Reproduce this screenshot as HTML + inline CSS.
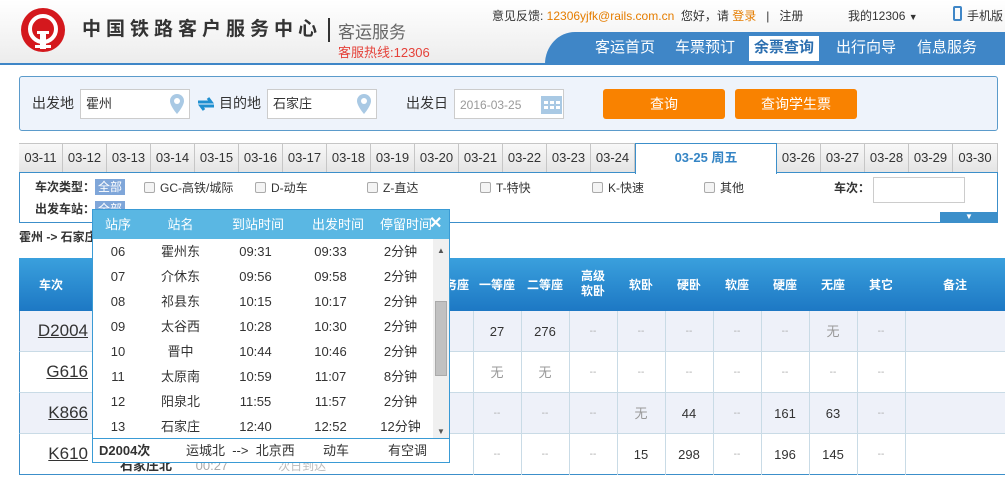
<!DOCTYPE html>
<html><head><meta charset="utf-8"><style>
*{margin:0;padding:0;box-sizing:border-box}
body{width:1005px;height:480px;overflow:hidden;position:relative;font-family:"Liberation Sans","Noto Sans CJK SC",sans-serif;font-size:12px;line-height:16px;color:#333;background:#fff}
.a{position:absolute}
.hdr{left:0;top:0;width:1005px;height:64px;background:linear-gradient(#fff,#ececec)}
.nav{left:545px;top:32px;width:460px;height:32px;background:#3f86c7;border-top-left-radius:30px 32px}
.nav span{position:absolute;top:6px;color:#fff;font-size:15px;line-height:20px}
.sb{left:19px;top:76px;width:979px;height:55px;background:#eef3fb;border:1px solid #5b9bcb;border-radius:3px}
.inp{background:#fff;border:1px solid #ccc;height:30px;top:89px;font-size:13px;padding:6px 5px;color:#333}
.lbl{font-size:14px;top:95px;color:#333}
.btn{top:89px;height:30px;background:#f98200;border-radius:3px;color:#fff;font-size:14px;text-align:center;line-height:30px}
.tab{top:143px;height:30px;width:44px;border:1px solid #c6c6c6;border-left:none;background:linear-gradient(#f8f8f8,#e4e4e4);text-align:center;line-height:28px;font-size:13px;color:#333}
.fb{left:19px;top:172px;width:979px;height:51px;border:1px solid #3c8fca;border-top:1px solid #3c8fca}
.cb{display:inline-block;width:11px;height:11px;border:1px solid #aaa;border-radius:2px;background:#f4f4f4;vertical-align:-1px;margin-right:5px}
.th{top:258px;height:53px;background:linear-gradient(#3aa0dd,#1d78c4);left:19px;width:986px}
.row{left:19px;width:986px;height:41px;border-bottom:1px solid #c9dbe6;border-left:1px solid #3c8fca}
.cell{position:absolute;width:48px;text-align:center;font-size:13px;top:13px;color:#333;line-height:16px}
.g{color:#aaa;font-size:10px;top:13px}
.vl{position:absolute;top:311px;width:1px;height:164px;background:#c9dbe6}
.tn{position:absolute;left:8px;top:10px;font-size:17px;line-height:20px;text-decoration:underline;color:#333;width:60px;text-align:right}
.pop{left:92px;top:209px;width:358px;height:254px;background:#fff;border:1px solid #3a9bd5}
.ph{left:0;top:0;width:356px;height:29px;background:#5ab7e3;color:#fff;font-size:13px}
.ph span,.pr span{position:absolute;text-align:center;line-height:16px}
.pr{left:0;width:340px;height:25px;font-size:13px;color:#333}
</style></head><body>
<div class="a hdr"></div>
<div class="a" style="left:0;top:63px;width:1005px;height:2px;background:#3f86c7"></div>
<svg class="a" style="left:20px;top:7px" width="46" height="46" viewBox="0 0 46 46"><circle cx="23" cy="23" r="22" fill="#d4181d"/><circle cx="23" cy="22" r="13" fill="none" stroke="#fff" stroke-width="4"/><path d="M17 24h12v3h-3v11h5v3H15v-3h5V27h-3z" fill="#fff"/><rect x="20" y="30" width="6" height="12" fill="#fff"/></svg>
<div class="a" style="left:82px;top:18px;font-size:19px;line-height:24px;font-weight:bold;color:#333;letter-spacing:5px">中国铁路客户服务中心</div>
<div class="a" style="left:328px;top:18px;width:2px;height:24px;background:#333"></div>
<div class="a" style="left:338px;top:22px;font-size:17px;line-height:22px;color:#666">客运服务</div>
<div class="a" style="left:338px;top:45px;font-size:13px;color:#e5423a">客服热线:12306</div>
<div class="a" style="left:492px;top:8px;font-size:12px;color:#333">意见反馈: <span style="color:#e57d00">12306yjfk@rails.com.cn</span>&nbsp;&nbsp;您好，请 <span style="color:#e57d00">登录</span>&nbsp;&nbsp;&nbsp;|&nbsp;&nbsp;&nbsp;注册</div>
<div class="a" style="left:848px;top:8px;font-size:12px">我的12306 <span style="font-size:9px">▼</span></div>
<div class="a" style="left:953px;top:6px;width:9px;height:15px;border:2px solid #3f86c7;border-radius:2px"></div>
<div class="a" style="left:967px;top:8px;font-size:12px">手机版</div>
<div class="a nav"><span style="left:50px">客运首页</span><span style="left:130px">车票预订</span><span style="left:204px;top:4px;background:#fff;color:#2c6fb0;font-weight:bold;padding:2px 5px 3px">余票查询</span><span style="left:291px">出行向导</span><span style="left:372px">信息服务</span></div>

<div class="a sb"></div>
<div class="a lbl" style="left:32px">出发地</div>
<div class="a inp" style="left:80px;width:110px">霍州</div>
<svg class="a" style="left:169px;top:93px" width="16" height="22"><path d="M8 1a7 7 0 0 0-7 7c0 5 7 13 7 13s7-8 7-13a7 7 0 0 0-7-7z" fill="#a9c9e4"/><circle cx="8" cy="8" r="3" fill="#fff"/></svg>
<svg class="a" style="left:197px;top:96px" width="18" height="16"><path d="M1 6h13l-3-4M17 10H4l3 4" stroke="#1f8fd0" stroke-width="3" fill="none"/></svg>
<div class="a lbl" style="left:219px">目的地</div>
<div class="a inp" style="left:267px;width:110px">石家庄</div>
<svg class="a" style="left:356px;top:93px" width="16" height="22"><path d="M8 1a7 7 0 0 0-7 7c0 5 7 13 7 13s7-8 7-13a7 7 0 0 0-7-7z" fill="#a9c9e4"/><circle cx="8" cy="8" r="3" fill="#fff"/></svg>
<div class="a lbl" style="left:406px">出发日</div>
<div class="a inp" style="left:454px;width:110px;color:#999;font-size:12px;padding-top:7px">2016-03-25</div>
<svg class="a" style="left:541px;top:94px" width="21" height="20"><rect x="0" y="2" width="21" height="18" fill="#a9c9e4"/><g fill="#fff"><rect x="3" y="7" width="4" height="3"/><rect x="9" y="7" width="4" height="3"/><rect x="15" y="7" width="4" height="3"/><rect x="3" y="12" width="4" height="3"/><rect x="9" y="12" width="4" height="3"/><rect x="15" y="12" width="4" height="3"/></g></svg>
<div class="a btn" style="left:603px;width:122px">查询</div>
<div class="a btn" style="left:735px;width:122px">查询学生票</div>

<div class="a" style="left:19px;top:143px;width:1px;height:30px;background:#c6c6c6"></div>
<div class="a tab" style="left:19px">03-11</div><div class="a tab" style="left:63px">03-12</div><div class="a tab" style="left:107px">03-13</div><div class="a tab" style="left:151px">03-14</div><div class="a tab" style="left:195px">03-15</div><div class="a tab" style="left:239px">03-16</div><div class="a tab" style="left:283px">03-17</div><div class="a tab" style="left:327px">03-18</div><div class="a tab" style="left:371px">03-19</div><div class="a tab" style="left:415px">03-20</div><div class="a tab" style="left:459px">03-21</div><div class="a tab" style="left:503px">03-22</div><div class="a tab" style="left:547px">03-23</div><div class="a tab" style="left:591px">03-24</div>
<div class="a tab" style="left:777px">03-26</div><div class="a tab" style="left:821px">03-27</div><div class="a tab" style="left:865px">03-28</div><div class="a tab" style="left:909px">03-29</div><div class="a tab" style="left:953px;width:45px">03-30</div>
<div class="a fb"></div>
<div class="a" style="left:635px;top:143px;width:142px;height:31px;background:#fff;border:1px solid #3c8fca;border-bottom:none;text-align:center;line-height:28px;font-size:13px;font-weight:bold;color:#3585c5">03-25 周五</div>
<div class="a" style="left:35px;top:179px;font-weight:bold;font-size:12px">车次类型：<span style="background:#7fa6d9;color:#fff;font-weight:normal;padding:1px 3px">全部</span></div>
<div class="a" style="left:144px;top:180px"><span class="cb"></span>GC-高铁/城际</div>
<div class="a" style="left:255px;top:180px"><span class="cb"></span>D-动车</div>
<div class="a" style="left:367px;top:180px"><span class="cb"></span>Z-直达</div>
<div class="a" style="left:480px;top:180px"><span class="cb"></span>T-特快</div>
<div class="a" style="left:592px;top:180px"><span class="cb"></span>K-快速</div>
<div class="a" style="left:704px;top:180px"><span class="cb"></span>其他</div>
<div class="a" style="left:834px;top:180px;font-weight:bold">车次：</div>
<div class="a" style="left:873px;top:177px;width:92px;height:26px;border:1px solid #ccc"></div>
<div class="a" style="left:35px;top:201px;font-weight:bold;font-size:12px">出发车站：<span style="background:#7fa6d9;color:#fff;font-weight:normal;padding:1px 3px">全部</span></div>
<div class="a" style="left:940px;top:212px;width:58px;height:10px;background:#3c8fca;color:#fff;font-size:8px;text-align:center;line-height:10px">▼</div>
<div class="a" style="left:19px;top:229px;font-weight:bold;font-size:12px">霍州 -&gt; 石家庄</div>

<div class="a th"></div>
<div class="a" style="left:19px;top:258px;width:986px;height:53px">
<span class="a" style="left:20px;top:19px;color:#fff;font-weight:bold">车次</span>
<span class="a" style="left:414px;top:19px;color:#fff;font-weight:bold">商务座</span>
<div class="a" style="left:454px;top:0;width:528px;height:53px;color:#fff;font-weight:bold">
<span class="a" style="left:0;top:19px;width:48px;text-align:center">一等座</span>
<span class="a" style="left:48px;top:19px;width:48px;text-align:center">二等座</span>
<span class="a" style="left:96px;top:11px;width:48px;text-align:center;line-height:15px">高级<br>软卧</span>
<span class="a" style="left:144px;top:19px;width:48px;text-align:center">软卧</span>
<span class="a" style="left:192px;top:19px;width:48px;text-align:center">硬卧</span>
<span class="a" style="left:240px;top:19px;width:48px;text-align:center">软座</span>
<span class="a" style="left:288px;top:19px;width:48px;text-align:center">硬座</span>
<span class="a" style="left:336px;top:19px;width:48px;text-align:center">无座</span>
<span class="a" style="left:384px;top:19px;width:48px;text-align:center">其它</span>
<span class="a" style="left:432px;top:19px;width:100px;text-align:center">备注</span>
</div></div>

<div class="a row" style="top:311px;background:#eef1f9"><div class="tn">D2004</div></div>
<div class="a row" style="top:352px"><div class="tn">G616</div></div>
<div class="a row" style="top:393px;background:#eef1f9"><div class="tn">K866</div></div>
<div class="a row" style="top:434px;border-bottom:1px solid #3c8fca"><div class="tn">K610</div></div>
<div class="vl" style="left:473px"></div><div class="vl" style="left:521px"></div><div class="vl" style="left:569px"></div><div class="vl" style="left:617px"></div><div class="vl" style="left:665px"></div><div class="vl" style="left:713px"></div><div class="vl" style="left:761px"></div><div class="vl" style="left:809px"></div><div class="vl" style="left:857px"></div><div class="vl" style="left:905px"></div>
<div class="a" style="left:473px;top:311px">
<div class="a" style="top:0"><span class="cell" style="left:0">27</span><span class="cell" style="left:48px">276</span><span class="cell g" style="left:96px">--</span><span class="cell g" style="left:144px">--</span><span class="cell g" style="left:192px">--</span><span class="cell g" style="left:240px">--</span><span class="cell g" style="left:288px">--</span><span class="cell" style="left:336px;color:#999">无</span><span class="cell g" style="left:384px">--</span></div>
<div class="a" style="top:41px"><span class="cell" style="left:0;color:#999">无</span><span class="cell" style="left:48px;color:#999">无</span><span class="cell g" style="left:96px">--</span><span class="cell g" style="left:144px">--</span><span class="cell g" style="left:192px">--</span><span class="cell g" style="left:240px">--</span><span class="cell g" style="left:288px">--</span><span class="cell g" style="left:336px">--</span><span class="cell g" style="left:384px">--</span></div>
<div class="a" style="top:82px"><span class="cell g" style="left:0">--</span><span class="cell g" style="left:48px">--</span><span class="cell g" style="left:96px">--</span><span class="cell" style="left:144px;color:#999">无</span><span class="cell" style="left:192px">44</span><span class="cell g" style="left:240px">--</span><span class="cell" style="left:288px">161</span><span class="cell" style="left:336px">63</span><span class="cell g" style="left:384px">--</span></div>
<div class="a" style="top:123px"><span class="cell g" style="left:0">--</span><span class="cell g" style="left:48px">--</span><span class="cell g" style="left:96px">--</span><span class="cell" style="left:144px">15</span><span class="cell" style="left:192px">298</span><span class="cell g" style="left:240px">--</span><span class="cell" style="left:288px">196</span><span class="cell" style="left:336px">145</span><span class="cell g" style="left:384px">--</span></div>
</div>
<div class="a" style="left:120px;top:458px;font-weight:bold;font-size:13px;color:#333">石家庄北 <span style="color:#aaa;font-weight:normal;margin-left:20px">00:27</span><span style="color:#bbb;font-weight:normal;margin-left:50px;font-size:12px">次日到达</span></div>

<div class="a pop">
<div class="a ph"><span style="left:0;width:50px;top:7px">站序</span><span style="left:60px;width:55px;top:7px">站名</span><span style="left:130px;width:70px;top:7px">到站时间</span><span style="left:210px;width:70px;top:7px">出发时间</span><span style="left:278px;width:70px;top:7px">停留时间</span><span style="left:336px;top:5px;font-size:16px;font-weight:bold;line-height:18px">✕</span></div>
<div class="a pr" style="top:30px"><span style="left:0;width:50px;top:4px">06</span><span style="left:60px;width:55px;top:4px">霍州东</span><span style="left:130px;width:65px;top:4px">09:31</span><span style="left:205px;width:65px;top:4px">09:33</span><span style="left:275px;width:65px;top:4px">2分钟</span></div>
<div class="a pr" style="top:55px"><span style="left:0;width:50px;top:4px">07</span><span style="left:60px;width:55px;top:4px">介休东</span><span style="left:130px;width:65px;top:4px">09:56</span><span style="left:205px;width:65px;top:4px">09:58</span><span style="left:275px;width:65px;top:4px">2分钟</span></div>
<div class="a pr" style="top:80px"><span style="left:0;width:50px;top:4px">08</span><span style="left:60px;width:55px;top:4px">祁县东</span><span style="left:130px;width:65px;top:4px">10:15</span><span style="left:205px;width:65px;top:4px">10:17</span><span style="left:275px;width:65px;top:4px">2分钟</span></div>
<div class="a pr" style="top:105px"><span style="left:0;width:50px;top:4px">09</span><span style="left:60px;width:55px;top:4px">太谷西</span><span style="left:130px;width:65px;top:4px">10:28</span><span style="left:205px;width:65px;top:4px">10:30</span><span style="left:275px;width:65px;top:4px">2分钟</span></div>
<div class="a pr" style="top:130px"><span style="left:0;width:50px;top:4px">10</span><span style="left:60px;width:55px;top:4px">晋中</span><span style="left:130px;width:65px;top:4px">10:44</span><span style="left:205px;width:65px;top:4px">10:46</span><span style="left:275px;width:65px;top:4px">2分钟</span></div>
<div class="a pr" style="top:155px"><span style="left:0;width:50px;top:4px">11</span><span style="left:60px;width:55px;top:4px">太原南</span><span style="left:130px;width:65px;top:4px">10:59</span><span style="left:205px;width:65px;top:4px">11:07</span><span style="left:275px;width:65px;top:4px">8分钟</span></div>
<div class="a pr" style="top:180px"><span style="left:0;width:50px;top:4px">12</span><span style="left:60px;width:55px;top:4px">阳泉北</span><span style="left:130px;width:65px;top:4px">11:55</span><span style="left:205px;width:65px;top:4px">11:57</span><span style="left:275px;width:65px;top:4px">2分钟</span></div>
<div class="a pr" style="top:205px"><span style="left:0;width:50px;top:4px">13</span><span style="left:60px;width:55px;top:4px">石家庄</span><span style="left:130px;width:65px;top:4px">12:40</span><span style="left:205px;width:65px;top:4px">12:52</span><span style="left:275px;width:65px;top:4px">12分钟</span></div>
<div class="a" style="left:340px;top:29px;width:16px;height:199px;background:#f0f0f0"></div>
<div class="a" style="left:342px;top:91px;width:12px;height:75px;background:#c1c1c1;border:1px solid #aaa"></div>
<div class="a" style="left:344px;top:33px;font-size:8px;color:#555">▲</div>
<div class="a" style="left:344px;top:214px;font-size:8px;color:#555">▼</div>
<div class="a" style="left:0;top:228px;width:356px;height:24px;border-top:1px solid #3a9bd5;font-size:13px">
<span class="a" style="left:6px;top:4px;font-weight:bold">D2004次</span><span class="a" style="left:93px;top:4px">运城北&nbsp;&nbsp;--&gt;&nbsp;&nbsp;北京西</span><span class="a" style="left:230px;top:4px">动车</span><span class="a" style="left:295px;top:4px">有空调</span></div>
</div>
</body></html>
